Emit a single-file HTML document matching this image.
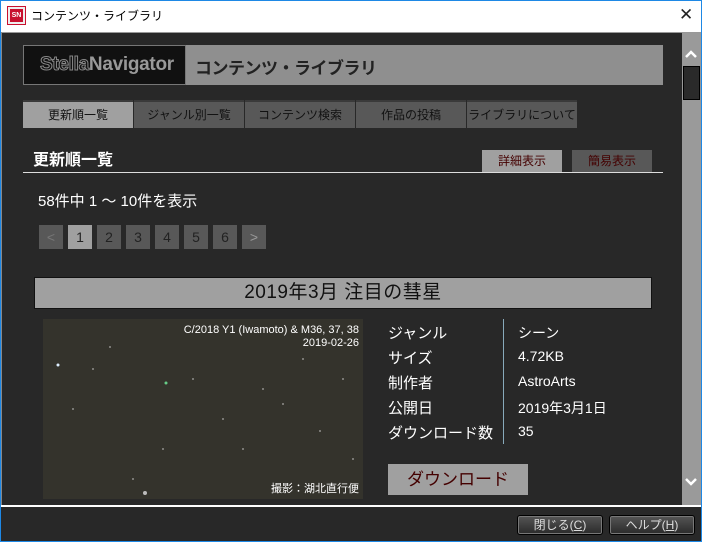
<!DOCTYPE html>
<html><head><meta charset="utf-8"><style>
*{margin:0;padding:0;box-sizing:border-box}
body{width:702px;height:542px;overflow:hidden;background:#282828;font-family:"Liberation Sans","Noto Sans CJK JP",sans-serif;position:relative}
.a{position:absolute}
.tab{position:absolute;top:100px;height:28px;width:110px;background:#585858;border-top:2px solid #3a3a3a;color:#111;font-size:12px;text-align:center;line-height:27px}
.pg{position:absolute;top:225px;width:24px;height:24px;background:#585858;color:#222;font-size:14px;text-align:center;line-height:24px}
.lb{position:absolute;left:388px;color:#fff;font-size:15px}
.vl{position:absolute;left:518px;color:#fff;font-size:14px}
.fb{position:absolute;top:515px;height:20px;width:86px;background:linear-gradient(#555,#2a2a2a);border:1px solid #000;border-radius:3px;box-shadow:inset 0 0 0 1px #777;color:#ddd;font-size:12px;text-align:center;line-height:18px}
</style></head><body>
<div class="a" style="left:0;top:0;width:702px;height:32px;background:#fff;border:1px solid #1e88e5;border-bottom:none"></div>
<div class="a" style="left:8px;top:7px;width:17px;height:17px;background:#c8102e;border:2px solid #eee;outline:1px solid #c8102e;color:#fff;font-size:7px;font-weight:bold;text-align:center;line-height:13px">SN</div>
<div class="a" style="left:31px;top:7px;font-size:12px;color:#000">コンテンツ・ライブラリ</div>
<div class="a" style="left:679px;top:5px;font-size:17px;color:#222">✕</div>
<div class="a" style="left:0;top:32px;width:1px;height:510px;background:#1e88e5"></div>
<div class="a" style="left:701px;top:32px;width:1px;height:510px;background:#1e88e5"></div>
<div class="a" style="left:0;top:541px;width:702px;height:1px;background:#1e88e5"></div>
<div class="a" style="left:1px;top:32px;width:700px;height:1px;background:#999"></div>
<div class="a" style="left:1px;top:32px;width:1px;height:473px;background:#888"></div>

<div class="a" style="left:23px;top:45px;width:640px;height:40px;background:#8f8f8f"></div>
<div class="a" style="left:23px;top:45px;width:163px;height:40px;background:#111;border:1px solid #777"></div>
<div class="a" style="left:40px;top:54px;font-size:19px;font-weight:bold;letter-spacing:-0.3px"><span style="color:#111;-webkit-text-stroke:1px #888">Stella</span><span style="color:#999">Navigator</span></div>
<div class="a" style="left:195px;top:54px;font-size:17px;font-weight:bold;color:#222;letter-spacing:-0.5px">コンテンツ・ライブラリ</div>

<div class="tab" style="left:23px;background:#a0a0a0">更新順一覧</div>
<div class="tab" style="left:134px">ジャンル別一覧</div>
<div class="tab" style="left:245px">コンテンツ検索</div>
<div class="tab" style="left:356px">作品の投稿</div>
<div class="tab" style="left:467px">ライブラリについて</div>

<div class="a" style="left:33px;top:146px;font-size:16px;font-weight:bold;color:#fff">更新順一覧</div>
<div class="a" style="left:482px;top:150px;width:80px;height:22px;background:#a0a0a0;color:#400;font-size:12px;text-align:center;line-height:22px">詳細表示</div>
<div class="a" style="left:572px;top:150px;width:80px;height:22px;background:#585858;color:#400;font-size:12px;text-align:center;line-height:22px">簡易表示</div>
<div class="a" style="left:23px;top:172px;width:640px;height:1px;background:#ddd"></div>

<div class="a" style="left:38px;top:190px;font-size:15px;color:#fff">58件中 1 ～ 10件を表示</div>
<div class="pg" style="left:39px;color:#777">&lt;</div>
<div class="pg" style="left:68px;background:#a0a0a0">1</div>
<div class="pg" style="left:97px">2</div>
<div class="pg" style="left:126px">3</div>
<div class="pg" style="left:155px">4</div>
<div class="pg" style="left:184px">5</div>
<div class="pg" style="left:213px">6</div>
<div class="pg" style="left:242px;color:#999">&gt;</div>

<div class="a" style="left:34px;top:277px;width:618px;height:32px;background:#a0a0a0;border:1px solid #111;color:#111;font-size:19px;letter-spacing:0.5px;text-align:center;line-height:30px">2019年3月 注目の彗星</div>

<svg class="a" style="left:43px;top:319px" width="320" height="180">
<rect width="320" height="180" fill="#34332c"/>
<g fill="#ccc" opacity=".6">
<circle cx="67" cy="28" r="1"/><circle cx="220" cy="70" r="1"/><circle cx="300" cy="60" r="1"/><circle cx="277" cy="112" r="1"/><circle cx="120" cy="130" r="1"/><circle cx="230" cy="170" r="1"/><circle cx="30" cy="90" r="1"/><circle cx="180" cy="100" r="1"/><circle cx="260" cy="40" r="1"/><circle cx="150" cy="60" r="1"/><circle cx="90" cy="160" r="1"/><circle cx="310" cy="140" r="1"/><circle cx="200" cy="130" r="1"/><circle cx="50" cy="50" r="1"/><circle cx="240" cy="85" r="1"/>
</g>
<circle cx="15" cy="46" r="1.5" fill="#def"/>
<circle cx="123" cy="64" r="1.5" fill="#6c8"/>
<circle cx="102" cy="174" r="2" fill="#bbb"/>
<text x="316" y="14" fill="#fff" font-size="11" text-anchor="end" font-family="Liberation Sans">C/2018 Y1 (Iwamoto) &amp; M36, 37, 38</text>
<text x="316" y="27" fill="#fff" font-size="11" text-anchor="end" font-family="Liberation Sans">2019-02-26</text>
<text x="316" y="173" fill="#fff" font-size="11" text-anchor="end" font-family="Liberation Sans,Noto Sans CJK JP,sans-serif">撮影：湖北直行便</text>
</svg>

<div class="lb" style="top:322px">ジャンル</div>
<div class="lb" style="top:347px">サイズ</div>
<div class="lb" style="top:372px">制作者</div>
<div class="lb" style="top:397px">公開日</div>
<div class="lb" style="top:422px">ダウンロード数</div>
<div class="a" style="left:503px;top:319px;width:1px;height:125px;background:#8ab"></div>
<div class="vl" style="top:323px">シーン</div>
<div class="vl" style="top:348px">4.72KB</div>
<div class="vl" style="top:373px">AstroArts</div>
<div class="vl" style="top:398px">2019年3月1日</div>
<div class="vl" style="top:423px">35</div>
<div class="a" style="left:388px;top:464px;width:140px;height:31px;background:#a0a0a0;color:#400;font-size:17px;text-align:center;line-height:31px">ダウンロード</div>

<div class="a" style="left:682px;top:33px;width:19px;height:472px;background:#9a9a9a"></div>
<div class="a" style="left:683px;top:66px;width:17px;height:34px;background:#2a2a2a;border:1px solid #000"></div>
<svg class="a" style="left:684px;top:48px" width="14" height="12"><path d="M2 9L7 4L12 9" stroke="#fff" stroke-width="2.5" fill="none"/></svg>
<svg class="a" style="left:684px;top:476px" width="14" height="12"><path d="M2 3L7 8L12 3" stroke="#fff" stroke-width="2.5" fill="none"/></svg>

<div class="a" style="left:1px;top:505px;width:700px;height:2px;background:#fff"></div>
<div class="fb" style="left:517px">閉じる(<u>C</u>)</div>
<div class="fb" style="left:609px">ヘルプ(<u>H</u>)</div>
</body></html>
